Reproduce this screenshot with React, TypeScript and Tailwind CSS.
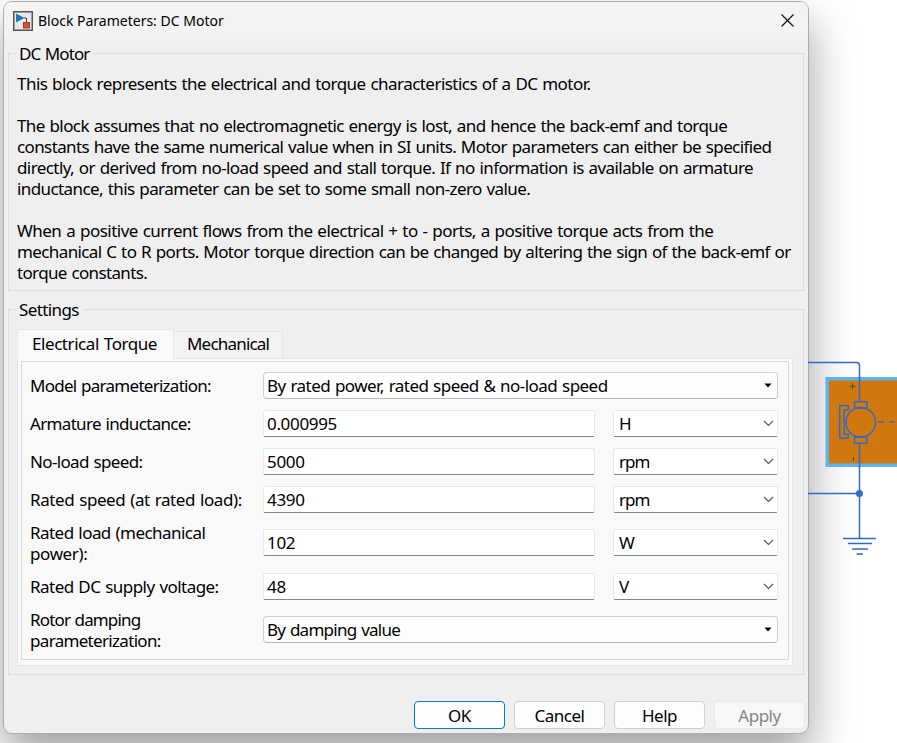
import React from 'react';

const units = 'flex h-[27px] items-center justify-between rounded-[2px] border border-[#e8e8e8] border-b-[#868686] bg-white';

function Line({ t, c }: { t: string; c: string }) {
  return <div className={'whitespace-nowrap ' + c}>{t}</div>;
}

function Drop({ value, c }: { value: string; c: string }) {
  return (
    <div className="flex h-[27px] w-[515px] items-center justify-between rounded-[4px] border border-[#cfcfcf] border-b-[#b8b8b8] bg-[#fdfdfd] pl-[3px] pr-[5px]">
      <span className={'whitespace-nowrap ' + c}>{value}</span>
      <svg width="8" height="5" viewBox="0 0 8 5"><path d="M0.5 0.5h7L4 4.5z" fill="#000" /></svg>
    </div>
  );
}

function Field({ value, unit }: { value: string; unit: string }) {
  return (
    <div className="flex gap-[18px]">
      <div className={units + ' w-[332px] pl-[3px]'}><span className="tracking-[-0.33px]">{value}</span></div>
      <div className={units + ' w-[165px] pl-[5px] pr-[3px]'}>
        <span className="tracking-[-0.95px]">{unit}</span>
        <svg width="11" height="7" viewBox="0 0 11 7" fill="none"><path d="M1 1l4.5 4.5L10 1" stroke="#555" strokeWidth="1.1" /></svg>
      </div>
    </div>
  );
}

function Row({ lines, h, children }: { lines: [string, string][]; h: string; children: React.ReactNode }) {
  return (
    <div className={'flex items-center ' + h}>
      <div className="w-[233px]">
        {lines.map(([t, c]) => <Line key={t} t={t} c={c} />)}
      </div>
      {children}
    </div>
  );
}

function Button({ label, c }: { label: string; c: string }) {
  return <button className={'h-[28px] w-[91px] rounded-[4px] border pt-px tracking-[-0.5px] ' + c}>{label}</button>;
}

function Circuit() {
  return (
    <svg className="absolute left-[808px] top-[340px]" width="89" height="230" viewBox="808 340 89 230" fill="none">
      <rect x="827.25" y="378.75" width="90" height="86.5" fill="#d0780b" stroke="#5db2f3" strokeWidth="3.5" />
      <g stroke="#3269cb" strokeWidth="1.5">
        <path d="M808 362.5H857Q859.5 362.5 859.5 366V401M859.5 444V538" />
        <path d="M808 493.5H859M843 538.5H876M848 543.5H872M852 549H868M856.5 554H863" />
        <rect x="854.5" y="401.7" width="12.3" height="6.3" />
        <rect x="854.5" y="437" width="12.3" height="6.3" />
        <circle cx="860.7" cy="422.3" r="14.8" />
        <path d="M848.3 405.6H839.7V438.3H848.3V434.2H844.2V409.7H848.3Z" />
        <path d="M878 422H884M889 422H894.5" />
      </g>
      <circle cx="859.4" cy="493.4" r="3.5" fill="#3269cb" />
      <path d="M849.5 386.3H855.5M852.5 383.3V389.3M853.5 457V461" stroke="#45502f" strokeWidth="1.1" />
    </svg>
  );
}

export default function App() {
  return (
    <div className="relative h-[743px] w-[897px] overflow-hidden bg-white font-['Noto_Sans',sans-serif] text-[17px] leading-[21px] text-black">
      <div className="ml-[3px] pt-px">
        <div className="h-[733px] w-[806px] overflow-hidden rounded-[9px] border border-[#adadad] bg-[#efefef] shadow-[0_22px_46px_rgba(0,0,0,0.38)]">
          <div className="flex h-[37px] items-center justify-between bg-[#f3f3f3] pl-[9px] pr-[14.5px]">
            <div className="flex items-center gap-[5px]">
              <svg width="20" height="20" viewBox="0 0 20 20">
                <rect x="0.75" y="0.75" width="18.5" height="18.5" fill="#e6e9ee" stroke="#555" strokeWidth="1.5" />
                <path d="M3 2.5L11.5 7L3 11.5Z" fill="#2478b0" />
                <path d="M11 7H13.5V12" stroke="#444" fill="none" />
                <rect x="10.5" y="11.5" width="6" height="5.5" fill="#d9532c" stroke="#a63b1a" />
              </svg>
              <span className="whitespace-nowrap text-[14px]">Block Parameters: DC Motor</span>
            </div>
            <svg width="13" height="13" viewBox="0 0 13 13"><path d="M0.5 0.5L12.5 12.5M12.5 0.5L0.5 12.5" stroke="#111" strokeWidth="1.2" /></svg>
          </div>
          <div className="[word-spacing:0.9px]">
            <fieldset className="ml-[4px] mt-[4px] h-[248px] w-[796px] min-w-0 border border-[#dcdcdc] pl-[8px] pt-[9px]">
              <legend className="-ml-px h-[21px] pl-[3px] pr-[4px]"><span className="tracking-[-0.9px]">DC Motor</span></legend>
              <Line c="tracking-[-0.54px]" t="This block represents the electrical and torque characteristics of a DC motor." />
              <div className="h-[21px]" />
              <Line c="tracking-[-0.59px]" t="The block assumes that no electromagnetic energy is lost, and hence the back-emf and torque" />
              <Line c="tracking-[-0.61px]" t="constants have the same numerical value when in SI units. Motor parameters can either be specified" />
              <Line c="tracking-[-0.585px]" t="directly, or derived from no-load speed and stall torque. If no information is available on armature" />
              <Line c="tracking-[-0.59px]" t="inductance, this parameter can be set to some small non-zero value." />
              <div className="h-[21px]" />
              <Line c="tracking-[-0.515px]" t="When a positive current flows from the electrical + to - ports, a positive torque acts from the" />
              <Line c="tracking-[-0.61px]" t="mechanical C to R ports. Motor torque direction can be changed by altering the sign of the back-emf or" />
              <Line c="tracking-[-0.65px]" t="torque constants." />
            </fieldset>
            <fieldset className="ml-[4px] mt-[8px] h-[376px] w-[796px] min-w-0 border border-[#dcdcdc] pl-[8px] pt-[9px]">
              <legend className="-ml-px h-[21px] pl-[3px] pr-[4px]"><span className="tracking-[-0.6px]">Settings</span></legend>
              <div className="flex h-[29px] items-end">
                <div className="relative z-10 -mb-px flex h-[30px] w-[157px] items-center border border-b-0 border-[#e5e5e5] bg-[#f9f9f9] pb-[3px] pl-[14px]"><span className="whitespace-nowrap tracking-[-0.43px]">Electrical Torque</span></div>
                <div className="flex h-[27px] w-[109px] items-center border border-b-0 border-l-0 border-[#e5e5e5] bg-[#f3f3f3] pb-[3px] pl-[13px]"><span className="tracking-[-0.8px]">Mechanical</span></div>
              </div>
              <div className="h-[308px] w-[776px] border border-[#e5e5e5] bg-[#f9f9f9] pl-[3px] pt-[2px]">
                <div className="h-[299px] w-[768px] border border-[#dadada] pl-[8px] pt-[4px]">
                  <Row h="h-[38px]" lines={[['Model parameterization:', 'tracking-[-0.73px]']]}><Drop c="tracking-[-0.54px]" value="By rated power, rated speed & no-load speed" /></Row>
                  <Row h="h-[38px]" lines={[['Armature inductance:', 'tracking-[-0.67px]']]}><Field value="0.000995" unit="H" /></Row>
                  <Row h="h-[38px]" lines={[['No-load speed:', 'tracking-[-0.65px]']]}><Field value="5000" unit="rpm" /></Row>
                  <Row h="h-[38px]" lines={[['Rated speed (at rated load):', 'tracking-[-0.41px]']]}><Field value="4390" unit="rpm" /></Row>
                  <Row h="h-[49px]" lines={[['Rated load (mechanical', 'tracking-[-0.55px]'], ['power):', 'tracking-[-0.38px]']]}><Field value="102" unit="W" /></Row>
                  <Row h="h-[38px]" lines={[['Rated DC supply voltage:', 'tracking-[-0.54px]']]}><Field value="48" unit="V" /></Row>
                  <Row h="h-[49px]" lines={[['Rotor damping', 'tracking-[-0.85px]'], ['parameterization:', 'tracking-[-0.68px]']]}><Drop c="tracking-[-0.72px]" value="By damping value" /></Row>
                </div>
              </div>
            </fieldset>
            <div className="mt-[26px] flex justify-end gap-[9px] pr-[3px]">
              <Button label="OK" c="border-[#0078d4] bg-[#fdfdfd]" />
              <Button label="Cancel" c="border-[#d0d0d0] bg-[#fdfdfd]" />
              <Button label="Help" c="border-[#d0d0d0] bg-[#fdfdfd]" />
              <Button label="Apply" c="border-[#e9e9e9] bg-[#f7f7f7] text-[#858585]" />
            </div>
          </div>
        </div>
      </div>
      <Circuit />
    </div>
  );
}
